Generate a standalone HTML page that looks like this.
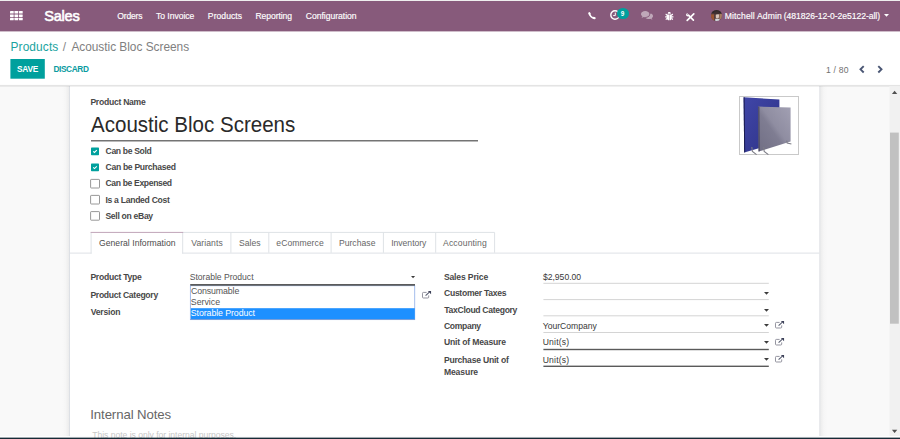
<!DOCTYPE html>
<html lang="en">
<head>
<meta charset="utf-8">
<title>Acoustic Bloc Screens - Odoo</title>
<style>
html,body{margin:0;padding:0;}
body{width:900px;height:439px;overflow:hidden;background:#fff;position:relative;font-family:"Liberation Sans",sans-serif;}
.a{position:absolute;}
.t{position:absolute;display:block;margin:0;padding:0;white-space:pre;line-height:1;text-decoration:none;}
nav,header,main{display:block;margin:0;padding:0;}
svg{position:absolute;overflow:visible;}
</style>
</head>
<body>
<svg style="left:0;top:0" width="900" height="439" viewBox="0 0 900 439">
<defs>
<linearGradient id="shl" x1="0" x2="1" y1="0" y2="0"><stop offset="0" stop-color="#f9f9f9"/><stop offset=".5" stop-color="#f6f6f6"/><stop offset="1" stop-color="#ececec"/></linearGradient>
<linearGradient id="shr" x1="1" x2="0" y1="0" y2="0"><stop offset="0" stop-color="#f9f9f9"/><stop offset=".5" stop-color="#f6f6f6"/><stop offset="1" stop-color="#ececec"/></linearGradient>
</defs>
<!-- browser top edge -->
<rect x="0" y="0" width="900" height="1" fill="#eeeeee"/>
<!-- navbar -->
<rect x="0" y="1" width="900" height="30.4" fill="#875A7B"/>
<!-- content background -->
<rect x="0" y="86" width="889.4" height="350.3" fill="#f9f9f9"/>
<rect x="62" y="86" width="7" height="350.3" fill="url(#shl)"/>
<rect x="820.3" y="86" width="7" height="350.3" fill="url(#shr)"/>
<!-- sheet -->
<rect x="69" y="86" width="751.3" height="350.3" fill="#dadde2"/>
<rect x="69.9" y="86" width="749.5" height="350.3" fill="#fff"/>
<!-- control panel bottom border -->
<rect x="0" y="84.9" width="900" height="1.1" fill="#e4e4e4"/>
<rect x="0" y="86" width="900" height="1" fill="#000" fill-opacity=".06"/>
<!-- scrollbar -->
<rect x="889.4" y="86.8" width="10.6" height="349.5" fill="#f1f1f1"/>
<rect x="890" y="132.6" width="8.8" height="191.1" fill="#c1c1c1"/>
<path d="M891.9 94 L894.6 90.7 L897.3 94 Z" fill="#505050"/>
<path d="M891.9 429.8 L894.6 433.1 L897.3 429.8 Z" fill="#505050"/>
<!-- bottom OS strip -->
<rect x="0" y="436.3" width="900" height="0.9" fill="#fff"/>

<!-- save button -->
<rect x="10.4" y="59" width="34.4" height="19.7" fill="#00A09D"/>

<!-- title underline -->
<rect x="91" y="140" width="387" height="1.5" fill="#747474"/>

<!-- tabs -->
<rect x="69.9" y="252.6" width="749.5" height="1" fill="#dee2e6"/>
<rect x="91.6" y="232.6" width="90.6" height="22" fill="#fff"/>
<path d="M91.1 253.6 V232.3 M182.7 232.3 V253.6" stroke="#dee2e6" stroke-width="1" fill="none"/>
<path d="M182.7 232.4 H494.6 V252.8 M230.9 232.4 V252.8 M268.8 232.4 V252.8 M331.1 232.4 V252.8 M383.4 232.4 V252.8 M435.7 232.4 V252.8" stroke="#dee2e6" stroke-width="1" fill="none"/>
<rect x="90.6" y="231.9" width="92.6" height="1" fill="#c0a5b8"/>

<!-- field underlines -->
<rect x="190.4" y="284.1" width="224.6" height="1.6" fill="#5a5a5a"/>
<rect x="543.4" y="282.8" width="225.4" height="1" fill="#d4d4d4"/>
<rect x="543.4" y="299.1" width="225.4" height="1" fill="#d4d4d4"/>
<rect x="543.4" y="315.3" width="225.4" height="1" fill="#d4d4d4"/>
<rect x="543.4" y="332" width="225.4" height="1" fill="#d4d4d4"/>
<rect x="543.4" y="348.8" width="225.4" height="1.4" fill="#5a5a5a"/>
<rect x="543.4" y="365.6" width="225.4" height="1.4" fill="#5a5a5a"/>

<!-- dropdown list -->
<rect x="190.4" y="285.7" width="224.3" height="33.9" fill="#fff" stroke="#9ab6ea" stroke-width=".9"/>
<rect x="190.9" y="308.2" width="223.9" height="11.1" fill="#1e90ff"/>
<rect x="190.4" y="319.2" width="224.6" height=".8" fill="#7b9bd3"/>
<rect x="190.4" y="284.1" width="224.6" height="1.6" fill="#5a5a5a"/>
</svg>

<!-- apps grid -->
<svg style="left:10.2px;top:11px" width="12.8" height="9.4" viewBox="0 0 12.8 9.4" fill="#fff">
<rect x="0" y="0" width="3.7" height="2.6" rx=".4"/><rect x="4.5" y="0" width="3.7" height="2.6" rx=".4"/><rect x="9" y="0" width="3.7" height="2.6" rx=".4"/>
<rect x="0" y="3.4" width="3.7" height="2.5" rx=".4"/><rect x="4.5" y="3.4" width="3.7" height="2.5" rx=".4"/><rect x="9" y="3.4" width="3.7" height="2.5" rx=".4"/>
<rect x="0" y="6.8" width="3.7" height="2.5" rx=".4"/><rect x="4.5" y="6.8" width="3.7" height="2.5" rx=".4"/><rect x="9" y="6.8" width="3.7" height="2.5" rx=".4"/>
</svg>
<!-- phone -->
<svg style="left:587.7px;top:11.8px" width="7.9" height="7.5" viewBox="0 0 82 76">
<path d="M16 12 C14 34 40 62 66 62" stroke="#fff" stroke-width="17" stroke-linecap="round" fill="none"/>
<path d="M3 8 C3 2 12 -1 18 1 C22 3 26 14 27 20 C27 25 20 27 19 30 L4 22 Z" fill="#fff"/>
<path d="M48 56 C52 54 55 48 60 49 C67 50 78 55 80 60 C82 66 78 73 71 75 L54 72 Z" fill="#fff"/>
</svg>
<!-- clock -->
<svg style="left:609.8px;top:10.3px" width="10" height="10" viewBox="0 0 10 10">
<circle cx="5" cy="5" r="4.2" fill="none" stroke="#fff" stroke-width="1.4"/>
<path d="M5.3 2.6 V5.6 H3.2" fill="none" stroke="#fff" stroke-width="1"/>
</svg>
<!-- badge -->
<div class="a" style="left:617px;top:7.6px;width:11.6px;height:11.3px;border-radius:50%;background:#00A09D"></div>
<!-- chat -->
<svg style="left:641px;top:10.9px;opacity:.47" width="12" height="9.5" viewBox="0 0 120 92" preserveAspectRatio="none" fill="#fff">
<path d="M42 0 C65 0 84 13 84 30 C84 47 65 60 42 60 C37 60 32 59 28 58 C22 63 13 66 4 66 C9 62 13 57 14 52 C5 46 0 39 0 30 C0 13 19 0 42 0 Z"/>
<path d="M92 32 C92 50 72 67 46 68 C54 74 66 78 78 78 C83 78 88 77 92 76 C98 81 107 84 116 84 C111 80 107 75 106 70 C115 64 120 57 120 48 C120 38 112 29 100 24 C96 24 92 28 92 32 Z"/>
</svg>
<!-- bug -->
<svg style="left:665.1px;top:11.5px" width="8.6" height="8.6" viewBox="0 0 90 88" fill="#fff">
<path d="M29 18 C29 4 36 0 45 0 C54 0 61 4 61 18 Z"/>
<path d="M19 24 H43 V86 C29 86 19 74 19 58 Z M47 24 H71 V58 C71 74 61 86 47 86 Z"/>
<path d="M2 44 H22 V56 H2 Z M68 44 H88 V56 H68 Z"/>
<path d="M10 16 L26 28 L19 37 L4 25 Z M80 16 L64 28 L71 37 L86 25 Z"/>
<path d="M16 62 L25 70 L13 84 L4 76 Z M74 62 L65 70 L77 84 L86 76 Z"/>
</svg>
<!-- tools -->
<svg style="left:686px;top:12.8px" width="8.6" height="8.4" viewBox="0 0 86 84">
<path d="M78 8 L12 74" stroke="#fff" stroke-width="17" stroke-linecap="round" fill="none"/>
<path d="M24 22 L74 72" stroke="#fff" stroke-width="17" stroke-linecap="round" fill="none"/>
<path d="M10 2 C-2 8 -2 26 10 33 C22 38 34 30 36 20 L24 25 L13 17 L18 3 Z" fill="#fff"/>
</svg>
<!-- avatar -->
<svg style="left:711.3px;top:9.8px" width="11" height="11" viewBox="0 0 110 110">
<defs><clipPath id="av"><circle cx="55" cy="55" r="55"/></clipPath></defs>
<g clip-path="url(#av)">
<rect width="110" height="110" fill="#5e4440"/>
<rect x="0" y="0" width="110" height="34" fill="#332a2c"/>
<rect x="0" y="44" width="30" height="70" fill="#9a5530"/>
<ellipse cx="62" cy="60" rx="20" ry="26" fill="#d9c5b8"/>
<rect x="42" y="88" width="44" height="30" fill="#cfd3da"/>
<rect x="84" y="40" width="26" height="50" fill="#a67c60"/>
<ellipse cx="56" cy="30" rx="28" ry="14" fill="#3f3030"/>
<rect x="36" y="40" width="10" height="40" fill="#4a3432"/>
</g>
</svg>
<!-- user caret -->
<svg style="left:884.2px;top:14.3px" width="5" height="2.7" viewBox="0 0 5 2.7"><path d="M0 0 H5 L2.5 2.7 Z" fill="#fff"/></svg>
<!-- pager chevrons -->
<svg style="left:858.5px;top:64.8px" width="6" height="8.6" viewBox="0 0 6 8.6"><path d="M4.7 1.1 L1.5 4.3 L4.7 7.5" fill="none" stroke="#4a5674" stroke-width="1.9"/></svg>
<svg style="left:876.5px;top:64.8px" width="6" height="8.6" viewBox="0 0 6 8.6"><path d="M1.3 1.1 L4.5 4.3 L1.3 7.5" fill="none" stroke="#4a5674" stroke-width="1.9"/></svg>
<!-- checkboxes -->
<svg style="left:0;top:0" width="900" height="439" viewBox="0 0 900 439">
<rect x="91" y="147.5" width="8" height="7.7" rx=".7" fill="#00A09D"/>
<path d="M93.2 151.3 L94.5 152.5 L96.8 150.2" fill="none" stroke="#fff" stroke-width="1.1"/>
<rect x="91" y="163.6" width="8" height="7.7" rx=".7" fill="#00A09D"/>
<path d="M93.2 167.4 L94.5 168.6 L96.8 166.3" fill="none" stroke="#fff" stroke-width="1.1"/>
<rect x="90.6" y="179.4" width="8.9" height="8.6" rx=".6" fill="#fff" stroke="#8c8c8c" stroke-width=".9"/>
<rect x="90.6" y="195.4" width="8.9" height="8.6" rx=".6" fill="#fff" stroke="#8c8c8c" stroke-width=".9"/>
<rect x="90.6" y="211.6" width="8.9" height="8.6" rx=".6" fill="#fff" stroke="#8c8c8c" stroke-width=".9"/>
</svg>
<!-- select carets -->
<svg class="car" style="left:411.1px;top:276.1px" width="4.1" height="2.3" viewBox="0 0 5 2.8"><path d="M0 0 H5 L2.5 2.8 Z" fill="#3c3c3c"/></svg>
<svg class="car" style="left:763.8px;top:292.2px" width="5" height="2.8" viewBox="0 0 5 2.8"><path d="M0 0 H5 L2.5 2.8 Z" fill="#3c3c3c"/></svg>
<svg class="car" style="left:763.8px;top:308.5px" width="5" height="2.8" viewBox="0 0 5 2.8"><path d="M0 0 H5 L2.5 2.8 Z" fill="#3c3c3c"/></svg>
<svg class="car" style="left:763.8px;top:324.2px" width="5" height="2.8" viewBox="0 0 5 2.8"><path d="M0 0 H5 L2.5 2.8 Z" fill="#3c3c3c"/></svg>
<svg class="car" style="left:763.8px;top:341.4px" width="5" height="2.8" viewBox="0 0 5 2.8"><path d="M0 0 H5 L2.5 2.8 Z" fill="#3c3c3c"/></svg>
<svg class="car" style="left:763.8px;top:358.4px" width="5" height="2.8" viewBox="0 0 5 2.8"><path d="M0 0 H5 L2.5 2.8 Z" fill="#3c3c3c"/></svg>
<!-- external link icons -->
<svg class="ext" style="left:421.6px;top:290.6px" width="9.2" height="7.6" viewBox="0 0 9.2 7.6"><path d="M4.6 1.4 H1.4 Q0.5 1.4 0.5 2.3 V6.1 Q0.5 7 1.4 7 H5.8 Q6.7 7 6.7 6.1 V4.4" fill="none" stroke="#82828f" stroke-width="0.85"/><path d="M3.6 4.6 L7.4 1.2" stroke="#555a6e" stroke-width="1.1" fill="none"/><path d="M5.9 0 H9.1 V3.2 Z" fill="#3c4058"/></svg>
<svg class="ext" style="left:775.4px;top:321.0px" width="9.2" height="7.6" viewBox="0 0 9.2 7.6"><path d="M4.6 1.4 H1.4 Q0.5 1.4 0.5 2.3 V6.1 Q0.5 7 1.4 7 H5.8 Q6.7 7 6.7 6.1 V4.4" fill="none" stroke="#82828f" stroke-width="0.85"/><path d="M3.6 4.6 L7.4 1.2" stroke="#555a6e" stroke-width="1.1" fill="none"/><path d="M5.9 0 H9.1 V3.2 Z" fill="#3c4058"/></svg>
<svg class="ext" style="left:775.4px;top:338.0px" width="9.2" height="7.6" viewBox="0 0 9.2 7.6"><path d="M4.6 1.4 H1.4 Q0.5 1.4 0.5 2.3 V6.1 Q0.5 7 1.4 7 H5.8 Q6.7 7 6.7 6.1 V4.4" fill="none" stroke="#82828f" stroke-width="0.85"/><path d="M3.6 4.6 L7.4 1.2" stroke="#555a6e" stroke-width="1.1" fill="none"/><path d="M5.9 0 H9.1 V3.2 Z" fill="#3c4058"/></svg>
<svg class="ext" style="left:775.4px;top:355.0px" width="9.2" height="7.6" viewBox="0 0 9.2 7.6"><path d="M4.6 1.4 H1.4 Q0.5 1.4 0.5 2.3 V6.1 Q0.5 7 1.4 7 H5.8 Q6.7 7 6.7 6.1 V4.4" fill="none" stroke="#82828f" stroke-width="0.85"/><path d="M3.6 4.6 L7.4 1.2" stroke="#555a6e" stroke-width="1.1" fill="none"/><path d="M5.9 0 H9.1 V3.2 Z" fill="#3c4058"/></svg>
<!-- product image -->
<div class="a" style="left:739px;top:95.6px;width:60px;height:59.8px;box-sizing:border-box;border:1px solid #c9c9c9;background:#fff"></div>
<svg style="left:739px;top:95.6px" width="60" height="60" viewBox="0 0 60 60">
<defs>
<linearGradient id="gb" x1="0" y1="0" x2="1" y2="1"><stop offset="0" stop-color="#4046a8"/><stop offset="1" stop-color="#2e3286"/></linearGradient>
<linearGradient id="gg" x1="1" y1="0" x2="0" y2="1"><stop offset="0" stop-color="#a2a0b3"/><stop offset=".45" stop-color="#8f8da1"/><stop offset=".55" stop-color="#7f7d92"/><stop offset="1" stop-color="#706e84"/></linearGradient>
</defs>
<path d="M4.6 1.2 L40.4 3.6 L40.4 46 L5.2 56.6 Z" fill="url(#gb)"/>
<path d="M4.6 1.2 L5.6 1.3 L6.2 56.3 L5.2 56.6 Z" fill="#1a1c50"/>
<path d="M19.2 10.6 L51.6 11.6 L51.6 45.6 L19.6 55.6 Z" fill="url(#gg)"/>
<path d="M19.2 10.6 L20.4 10.7 L20.8 55.2 L19.6 55.6 Z" fill="#4a4860"/>
<path d="M12.8 51 L13.4 55.5 L17.6 58.6 M24.6 51 L25.2 55.5 L29.4 58.6 M47.6 44.6 L48.2 47 L52.4 48" fill="none" stroke="#7c7c86" stroke-width="1.1"/>
</svg>


<nav>
<a class="t" style="left:44.17px;top:9px;font-size:14.6px;font-weight:400;letter-spacing:-0.233px;-webkit-text-stroke-width:0.6px;color:#fff">Sales</a>
<a class="t" style="left:117.34px;top:12px;font-size:8.6px;font-weight:400;letter-spacing:-0.206px;-webkit-text-stroke-width:0.15px;color:#fff">Orders</a>
<a class="t" style="left:155.98px;top:12px;font-size:8.6px;font-weight:400;letter-spacing:-0.042px;-webkit-text-stroke-width:0.15px;color:#fff">To Invoice</a>
<a class="t" style="left:207.86px;top:12px;font-size:8.6px;font-weight:400;letter-spacing:0.039px;-webkit-text-stroke-width:0.15px;color:#fff">Products</a>
<a class="t" style="left:255.46px;top:12px;font-size:8.6px;font-weight:400;letter-spacing:-0.081px;-webkit-text-stroke-width:0.15px;color:#fff">Reporting</a>
<a class="t" style="left:305.71px;top:12px;font-size:8.6px;font-weight:400;letter-spacing:-0.017px;-webkit-text-stroke-width:0.15px;color:#fff">Configuration</a>
<span class="t" style="left:724.77px;top:12px;font-size:8.6px;font-weight:400;letter-spacing:0.125px;-webkit-text-stroke-width:0.15px;color:#fff">Mitchell Admin</span>
<span class="t" style="left:783.77px;top:12px;font-size:8.6px;font-weight:400;letter-spacing:-0.052px;-webkit-text-stroke-width:0.15px;color:#fff">(481826-12-0-2e5122-all)</span>
<span class="t" style="left:620.71px;top:11px;font-size:6.4px;font-weight:700;color:#fff">9</span>
</nav>
<header>
<a class="t" style="left:10.50px;top:42px;font-size:11.9px;font-weight:400;letter-spacing:0.119px;color:#1aa3a0">Products</a>
<span class="t" style="left:62.69px;top:42px;font-size:11.9px;font-weight:400;color:#858585">/</span>
<span class="t" style="left:71.38px;top:42px;font-size:11.9px;font-weight:400;letter-spacing:-0.03px;color:#808080">Acoustic Bloc Screens</span>
<span class="t" style="left:16.92px;top:65px;font-size:8.3px;font-weight:700;letter-spacing:-0.218px;color:#fff">SAVE</span>
<span class="t" style="left:53.40px;top:65px;font-size:8.3px;font-weight:700;letter-spacing:-0.376px;color:#0a9ba0">DISCARD</span>
<span class="t" style="left:825.95px;top:66px;font-size:8.6px;font-weight:400;letter-spacing:0.201px;color:#707070">1 / 80</span>
</header>
<main>
<label class="t" style="left:90.39px;top:98px;font-size:8.6px;font-weight:700;letter-spacing:-0.261px;color:#484848">Product Name</label>
<h1 class="t" style="left:90.88px;top:115px;font-size:21.4px;font-weight:400;transform:scaleX(0.96);transform-origin:0 0;color:#2a2a2a">Acoustic Bloc Screens</h1>
<label class="t" style="left:105.52px;top:147px;font-size:8.6px;font-weight:700;letter-spacing:-0.337px;color:#484848">Can be Sold</label>
<label class="t" style="left:105.52px;top:163px;font-size:8.6px;font-weight:700;letter-spacing:-0.306px;color:#484848">Can be Purchased</label>
<label class="t" style="left:105.52px;top:179px;font-size:8.6px;font-weight:700;letter-spacing:-0.36px;color:#484848">Can be Expensed</label>
<label class="t" style="left:105.39px;top:196px;font-size:8.6px;font-weight:700;letter-spacing:-0.279px;color:#484848">Is a Landed Cost</label>
<label class="t" style="left:105.40px;top:212px;font-size:8.6px;font-weight:700;letter-spacing:-0.304px;color:#484848">Sell on eBay</label>
<a class="t" style="left:99.02px;top:239px;font-size:8.6px;font-weight:400;letter-spacing:0.029px;color:#4c4c4c">General Information</a>
<a class="t" style="left:191.29px;top:239px;font-size:8.6px;font-weight:400;letter-spacing:0.08px;color:#666">Variants</a>
<span class="t" style="left:238.97px;top:239px;font-size:8.6px;font-weight:400;letter-spacing:0.036px;color:#666">Sales</span>
<a class="t" style="left:276.33px;top:239px;font-size:8.6px;font-weight:400;letter-spacing:0.066px;color:#666">eCommerce</a>
<span class="t" style="left:338.88px;top:239px;font-size:8.6px;font-weight:400;letter-spacing:0.042px;color:#666">Purchase</span>
<a class="t" style="left:391.23px;top:239px;font-size:8.6px;font-weight:400;letter-spacing:-0.023px;color:#666">Inventory</a>
<a class="t" style="left:443.07px;top:239px;font-size:8.6px;font-weight:400;letter-spacing:0.136px;color:#666">Accounting</a>
<label class="t" style="left:90.39px;top:273px;font-size:8.6px;font-weight:700;letter-spacing:-0.261px;color:#484848">Product Type</label>
<label class="t" style="left:90.39px;top:291px;font-size:8.6px;font-weight:700;letter-spacing:-0.288px;color:#484848">Product Category</label>
<label class="t" style="left:90.68px;top:308px;font-size:8.6px;font-weight:700;letter-spacing:-0.205px;color:#484848">Version</label>
<span class="t" style="left:189.67px;top:273px;font-size:8.6px;font-weight:400;letter-spacing:-0.009px;color:#555">Storable Product</span>
<span class="t" style="left:190.91px;top:287px;font-size:8.8px;font-weight:400;letter-spacing:-0.105px;color:#555">Consumable</span>
<span class="t" style="left:190.77px;top:298px;font-size:8.8px;font-weight:400;letter-spacing:-0.006px;color:#555">Service</span>
<span class="t" style="left:190.77px;top:309px;font-size:8.8px;font-weight:400;letter-spacing:-0.083px;color:#fff">Storable Product</span>
<label class="t" style="left:443.90px;top:273px;font-size:8.6px;font-weight:700;letter-spacing:-0.15px;color:#484848">Sales Price</label>
<label class="t" style="left:444.02px;top:289px;font-size:8.6px;font-weight:700;letter-spacing:-0.292px;color:#484848">Customer Taxes</label>
<label class="t" style="left:444.31px;top:306px;font-size:8.6px;font-weight:700;letter-spacing:-0.317px;color:#484848">TaxCloud Category</label>
<label class="t" style="left:444.02px;top:322px;font-size:8.6px;font-weight:700;letter-spacing:-0.353px;color:#484848">Company</label>
<label class="t" style="left:443.96px;top:338px;font-size:8.6px;font-weight:700;letter-spacing:-0.169px;color:#484848">Unit of Measure</label>
<label class="t" style="left:443.89px;top:356px;font-size:8.6px;font-weight:700;letter-spacing:-0.226px;color:#484848">Purchase Unit of</label>
<label class="t" style="left:443.89px;top:368px;font-size:8.6px;font-weight:700;letter-spacing:-0.099px;color:#484848">Measure</label>
<span class="t" style="left:542.89px;top:273px;font-size:8.6px;font-weight:400;letter-spacing:0.004px;color:#383838">$2,950.00</span>
<span class="t" style="left:542.82px;top:322px;font-size:8.6px;font-weight:400;letter-spacing:-0.014px;color:#383838">YourCompany</span>
<span class="t" style="left:542.71px;top:338px;font-size:8.6px;font-weight:400;letter-spacing:0.186px;color:#383838">Unit(s)</span>
<span class="t" style="left:542.71px;top:356px;font-size:8.6px;font-weight:400;letter-spacing:0.186px;color:#383838">Unit(s)</span>
<h2 class="t" style="left:90.29px;top:408px;font-size:13.2px;font-weight:400;letter-spacing:-0.101px;color:#666">Internal Notes</h2>
<p class="t" style="left:92.25px;top:431px;font-size:8.6px;font-weight:400;letter-spacing:-0.031px;color:#c8c8c8">This note is only for internal purposes.</p>
</main>
<!-- bottom OS strip (top of taskbar) -->
<svg style="left:0;top:0;pointer-events:none" width="900" height="439" viewBox="0 0 900 439">
<rect x="0" y="437" width="900" height="1" fill="#1b2f3b" fill-opacity=".4"/>
<rect x="0" y="438" width="900" height="1" fill="#172b37"/>
</svg>
</body>
</html>
